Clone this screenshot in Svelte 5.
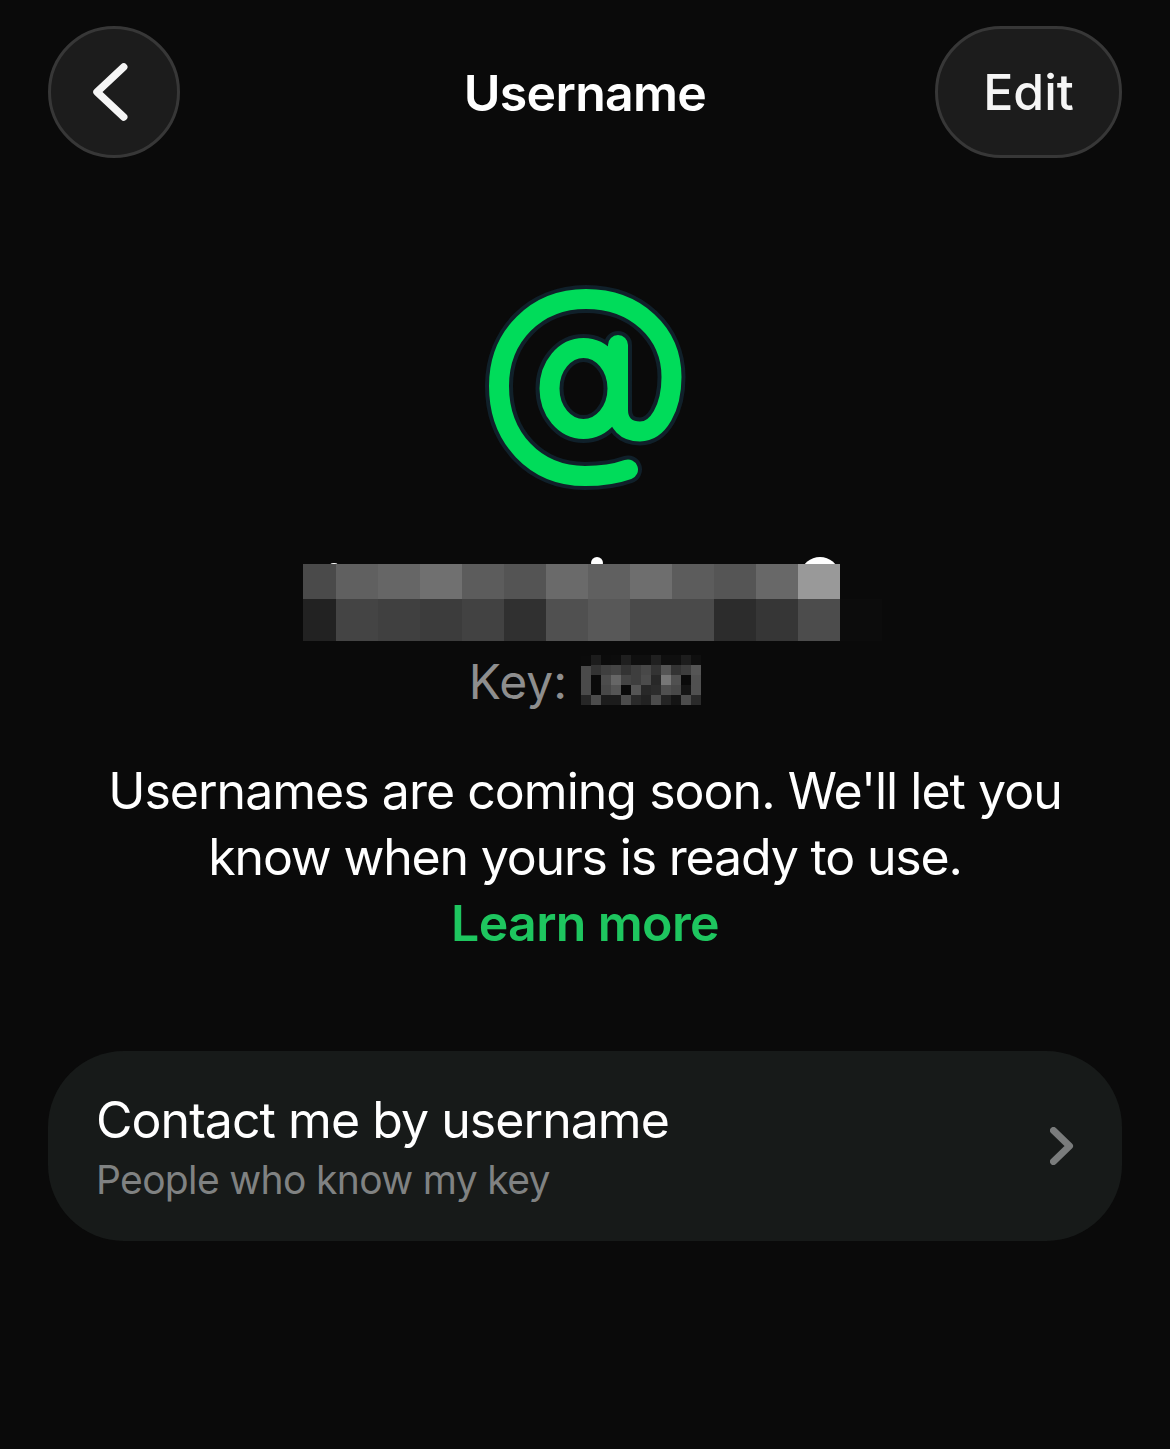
<script>
  const nameTop = ['#4a4a4a','#606060','#666666','#707070','#5c5c5c','#545454','#6a6a6a','#606060','#6e6e6e','#5c5c5c','#555555','#686868','#999999','#0a0a0a'];
  const nameBottom = ['#222222','#444444','#404040','#3c3c3c','#424242','#303030','#505050','#585858','#4a4a4a','#4a4a4a','#2c2c2c','#363636','#4c4c4c','#0c0c0c'];
  const nameCells = [...nameTop, ...nameBottom];
  const keyCells = [
    '#0b0b0b','#1c1c1c','#0b0b0b','#0c0c0c','#1f1f1f','#0f0f0f','#0f0f0f','#202020','#0f0f0f','#0f0f0f','#1d1d1d','#0f0f0f',
    '#4a4a4a','#333333','#3f3f3f','#444444','#333333','#3e3e3e','#484848','#333333','#555555','#333333','#3d3d3d','#555555',
    '#4a4a4a','#0a0a0a','#4c4c4c','#666666','#444444','#3e3e3e','#4c4c4c','#282828','#777777','#505050','#0a0a0a','#505050',
    '#4a4a4a','#0a0a0a','#484848','#555555','#0a0a0a','#555555','#282828','#2c2c2c','#505050','#484848','#141414','#505050',
    '#262626','#4c4c4c','#1c1c1c','#1c1c1c','#4c4c4c','#2a2a2a','#222222','#4c4c4c','#242424','#141414','#4c4c4c','#2a2a2a'
  ];
  const atPath = 'M158 199.500C144 204.500 130 206 115 206C65 206 29 168 29 116C29 66 66 29 116 29C166 29 201.500 63 201.500 107C201.500 138 188 161.500 170 161.500C156 161.500 148 153 148 140V75';
</script>

<main class="page">
  <header class="nav">
    <button class="round back" aria-label="Back">
      <svg width="36" height="58" viewBox="0 0 36 58"><path d="M30.700 4L4 29L30.700 54" /></svg>
    </button>
    <h1>Username</h1>
    <button class="round edit">Edit</button>
  </header>

  <svg class="at" width="230" height="230" viewBox="0 0 230 230" aria-hidden="true">
    <g class="at-halo">
      <path d={atPath} />
      <ellipse cx="113.5" cy="118.5" rx="34" ry="40.5" />
    </g>
    <g class="at-main">
      <path d={atPath} />
      <ellipse cx="113.5" cy="118.5" rx="34" ry="40.5" />
    </g>
  </svg>

  <div class="name">
    <span class="peek peek-a"></span>
    <span class="peek peek-b"></span>
    <span class="peek peek-c"></span>
    <div class="name-grid">
      {#each nameCells as c}<span style:background={c}></span>{/each}
    </div>
  </div>

  <div class="key">
    <span>Key:</span>
    <div class="key-grid">
      {#each keyCells as c}<span style:background={c}></span>{/each}
    </div>
  </div>

  <p class="copy">
    Usernames are coming soon. We'll let you<br /><span class="tight">know when yours is ready to use.</span><br /><a href="#learn">Learn more</a>
  </p>

  <section class="card">
    <div class="card-text">
      <div class="card-title">Contact me by username</div>
      <div class="card-sub">People who know my key</div>
    </div>
    <svg width="24" height="38" viewBox="0 0 24 38" aria-hidden="true"><path d="M3.500 3.500L19.500 19L3.500 34.500" /></svg>
  </section>
</main>

<style>
  :global(body) {
    margin: 0;
    background: #0a0a0a;
  }
  .page {
    height: 1449px;
    box-sizing: border-box;
    padding: 26px 48px 0;
    display: flex;
    flex-direction: column;
    align-items: center;
    background: #0a0a0a;
    color: #fff;
    font-family: Inter, "Liberation Sans", sans-serif;
    overflow: hidden;
  }
  .nav {
    width: 100%;
    display: grid;
    grid-template-columns: 1fr auto 1fr;
    align-items: center;
  }
  .nav h1 {
    margin: 0;
    font-size: 50px;
    font-weight: 600;
    letter-spacing: -0.7px;
    line-height: 134px;
    height: 132px;
  }
  .round {
    height: 132px;
    box-sizing: border-box;
    border: 3px solid #373737;
    border-radius: 66px;
    background: #1c1c1c;
    color: #f5f5f5;
    padding: 0;
    font: inherit;
    display: flex;
    align-items: center;
    justify-content: center;
  }
  .back {
    width: 132px;
    justify-self: start;
  }
  .back svg {
    margin-left: -6px;
  }
  .back path {
    fill: none;
    stroke: #f5f5f5;
    stroke-width: 7.5px;
    stroke-linecap: round;
    stroke-linejoin: round;
  }
  .edit {
    width: 187px;
    justify-self: end;
    font-size: 50px;
    font-weight: 500;
  }
  .at {
    margin-top: 112px;
    flex: none;
  }
  .at path,
  .at ellipse {
    fill: none;
    stroke-linecap: round;
  }
  .at-halo path,
  .at-halo ellipse {
    stroke: #10202a;
    stroke-width: 28px;
  }
  .at-main path,
  .at-main ellipse {
    stroke: #00dc5a;
    stroke-width: 20px;
  }
  .name {
    position: relative;
    margin-top: 64px;
    align-self: flex-start;
    margin-left: 255px;
  }
  .name-grid {
    position: relative;
    display: grid;
    grid-template-columns: 33px repeat(13, 42px);
    grid-template-rows: 35px 42px;
  }
  .peek {
    position: absolute;
    background: #fff;
    border-radius: 50%;
  }
  .peek-a {
    left: 25px;
    top: -1px;
    width: 12px;
    height: 10px;
  }
  .peek-b {
    left: 288px;
    top: -7px;
    width: 12px;
    height: 12px;
  }
  .peek-c {
    left: 499px;
    top: -7px;
    width: 36px;
    height: 30px;
  }
  .key {
    margin-top: 14px;
    display: flex;
    align-items: center;
    gap: 14px;
    font-size: 48px;
    letter-spacing: 0.1px;
    color: #8e8e8e;
    height: 50px;
  }
  .key span:first-child {
    position: relative;
    top: 1px;
  }
  .key-grid {
    display: grid;
    grid-template-columns: repeat(12, 10px);
    grid-auto-rows: 10px;
  }
  .copy {
    margin: 53px 0 0;
    width: 100%;
    text-align: center;
    font-size: 50px;
    letter-spacing: -0.97px;
    line-height: 66px;
    color: #fff;
  }
  .tight {
    letter-spacing: -1.17px;
  }
  .copy a {
    color: #1ec65f;
    font-weight: 600;
    letter-spacing: -0.65px;
    text-decoration: none;
  }
  .card {
    margin-top: 95px;
    width: 100%;
    height: 190px;
    box-sizing: border-box;
    padding: 8px 48px 0 48px;
    border-radius: 76px;
    background: #171a19;
    display: flex;
    align-items: center;
    justify-content: space-between;
  }
  .card svg {
    margin-top: -8px;
  }
  .card-title {
    font-size: 50px;
    letter-spacing: -0.95px;
    line-height: 58px;
  }
  .card-sub {
    font-size: 39px;
    letter-spacing: -0.65px;
    line-height: 58px;
    color: #808282;
    margin-top: 2px;
  }
  .card path {
    fill: none;
    stroke: #7a7c7c;
    stroke-width: 7px;
    stroke-linecap: round;
    stroke-linejoin: round;
  }
</style>
